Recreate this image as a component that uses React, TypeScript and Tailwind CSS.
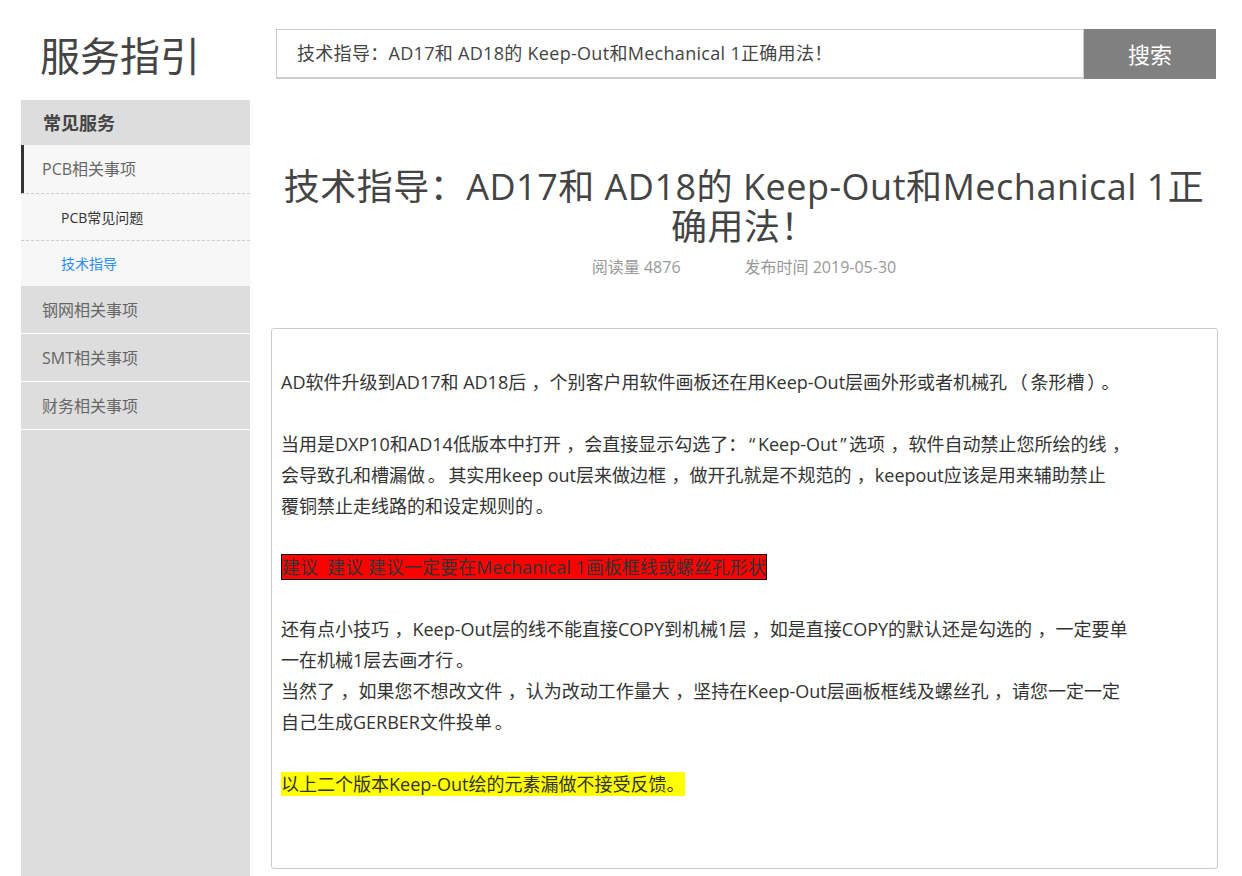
import React from 'react'

const font = 'font-["Open_Sans","Noto_Sans_CJK_SC",sans-serif]'

const otherMenu = ['钢网相关事项', 'SMT相关事项', '财务相关事项']

// 全角标点留白：逗号居中，括号句号两侧留白
function punct(text: string) {
  return text.split(/([，；。（）“”])/).map((part, i) => {
    if (part === '，') {
      return (
        <span key={i} className="ml-[0.3em]">
          {part}
        </span>
      )
    }
    if (/^[；。（）“”]$/.test(part)) {
      return (
        <span key={i} className="mx-[0.15em]">
          {part}
        </span>
      )
    }
    return part
  })
}

export default function App() {
  return (
    <div className={`${font} min-h-screen bg-white flex pl-[21px] pr-[24px] text-[#333]`}>
      {/* 左栏 */}
      <aside className="w-[229px] flex flex-col">
        <div className="h-[100px] flex items-center pl-[19px] pt-[12px]">
          <h2 className="text-[40px] text-[#444] leading-none">服务指引</h2>
        </div>
        <div className="flex-1 bg-[#ddd]">
          <div className="h-[45px] flex items-center pl-[22px] pt-[2px] text-[18px] font-bold text-[#444]">常见服务</div>
          <div className="bg-[#f7f7f7]">
            <div className="h-[48px] flex items-center pl-[18px] border-l-[3px] border-[#333] text-[16px] text-[#666]">
              PCB相关事项
            </div>
            <div className="border-t border-dashed border-[#ccc]" />
            <div className="h-[46px] flex items-center pl-[40px] text-[14px] text-[#333]">PCB常见问题</div>
            <div className="border-t border-dashed border-[#ccc]" />
            <div className="h-[45px] flex items-center pl-[40px] text-[14px] text-[#2b8ef0]">技术指导</div>
          </div>
          {otherMenu.map(m => (
            <div key={m} className="h-[48px] flex items-center pl-[21px] border-b border-white text-[16px] text-[#666]">
              {m}
            </div>
          ))}
        </div>
      </aside>

      {/* 主内容 */}
      <main className="flex-1 ml-[20px] flex flex-col">
        <div className="mt-[29px] ml-[6px] mr-[2px] flex h-[50px]">
          <div className="flex-1 border border-[#ccc] border-b-2 flex items-center pl-[20px] text-[18px] text-[#444] whitespace-nowrap tracking-[0.3px]">
            技术指导：AD17和 AD18的 Keep-Out和Mechanical 1正确用法！
          </div>
          <button className="w-[132px] bg-[#808080] text-white text-[22px]">搜索</button>
        </div>

        <h1 className="mt-[88px] text-center text-[36px] leading-[40px] text-[#444] px-[6px] tracking-[0.5px]">
          技术指导：AD17和 AD18的 Keep-Out和Mechanical 1正确用法！
        </h1>
        <div className="mt-[8px] flex justify-center gap-[64px] text-[16px] text-[#999]">
          <span>阅读量 4876</span>
          <span>发布时间 2019-05-30</span>
        </div>

        <div className="mt-[49px] mb-[8px] ml-[1px] border border-[#ccc] rounded-[3px] pt-[38px] pl-[9px] pb-[68px] text-[18px] leading-[30.9px] text-[#333] whitespace-nowrap">
          <p>{punct('AD软件升级到AD17和 AD18后，个别客户用软件画板还在用Keep-Out层画外形或者机械孔（条形槽）。')}</p>
          <p>&nbsp;</p>
          <p>
            {punct('当用是DXP10和AD14低版本中打开，会直接显示勾选了：“Keep-Out”选项，软件自动禁止您所绘的线，')}
            <br />
            {punct('会导致孔和槽漏做。其实用keep out层来做边框，做开孔就是不规范的，keepout应该是用来辅助禁止')}
            <br />
            {punct('覆铜禁止走线路的和设定规则的。')}
          </p>
          <p>&nbsp;</p>
          <p>
            <span className="bg-[#ff0000] border border-black">建议&nbsp; 建议 建议一定要在Mechanical 1画板框线或螺丝孔形状</span>
          </p>
          <p>&nbsp;</p>
          <p>
            {punct('还有点小技巧，Keep-Out层的线不能直接COPY到机械1层，如是直接COPY的默认还是勾选的，一定要单')}
            <br />
            {punct('一在机械1层去画才行。')}
            <br />
            {punct('当然了，如果您不想改文件，认为改动工作量大，坚持在Keep-Out层画板框线及螺丝孔，请您一定一定')}
            <br />
            {punct('自己生成GERBER文件投单。')}
          </p>
          <p>&nbsp;</p>
          <p>
            <span className="bg-[#ffff00]">以上二个版本Keep-Out绘的元素漏做不接受反馈。</span>
          </p>
        </div>
      </main>
    </div>
  )
}
